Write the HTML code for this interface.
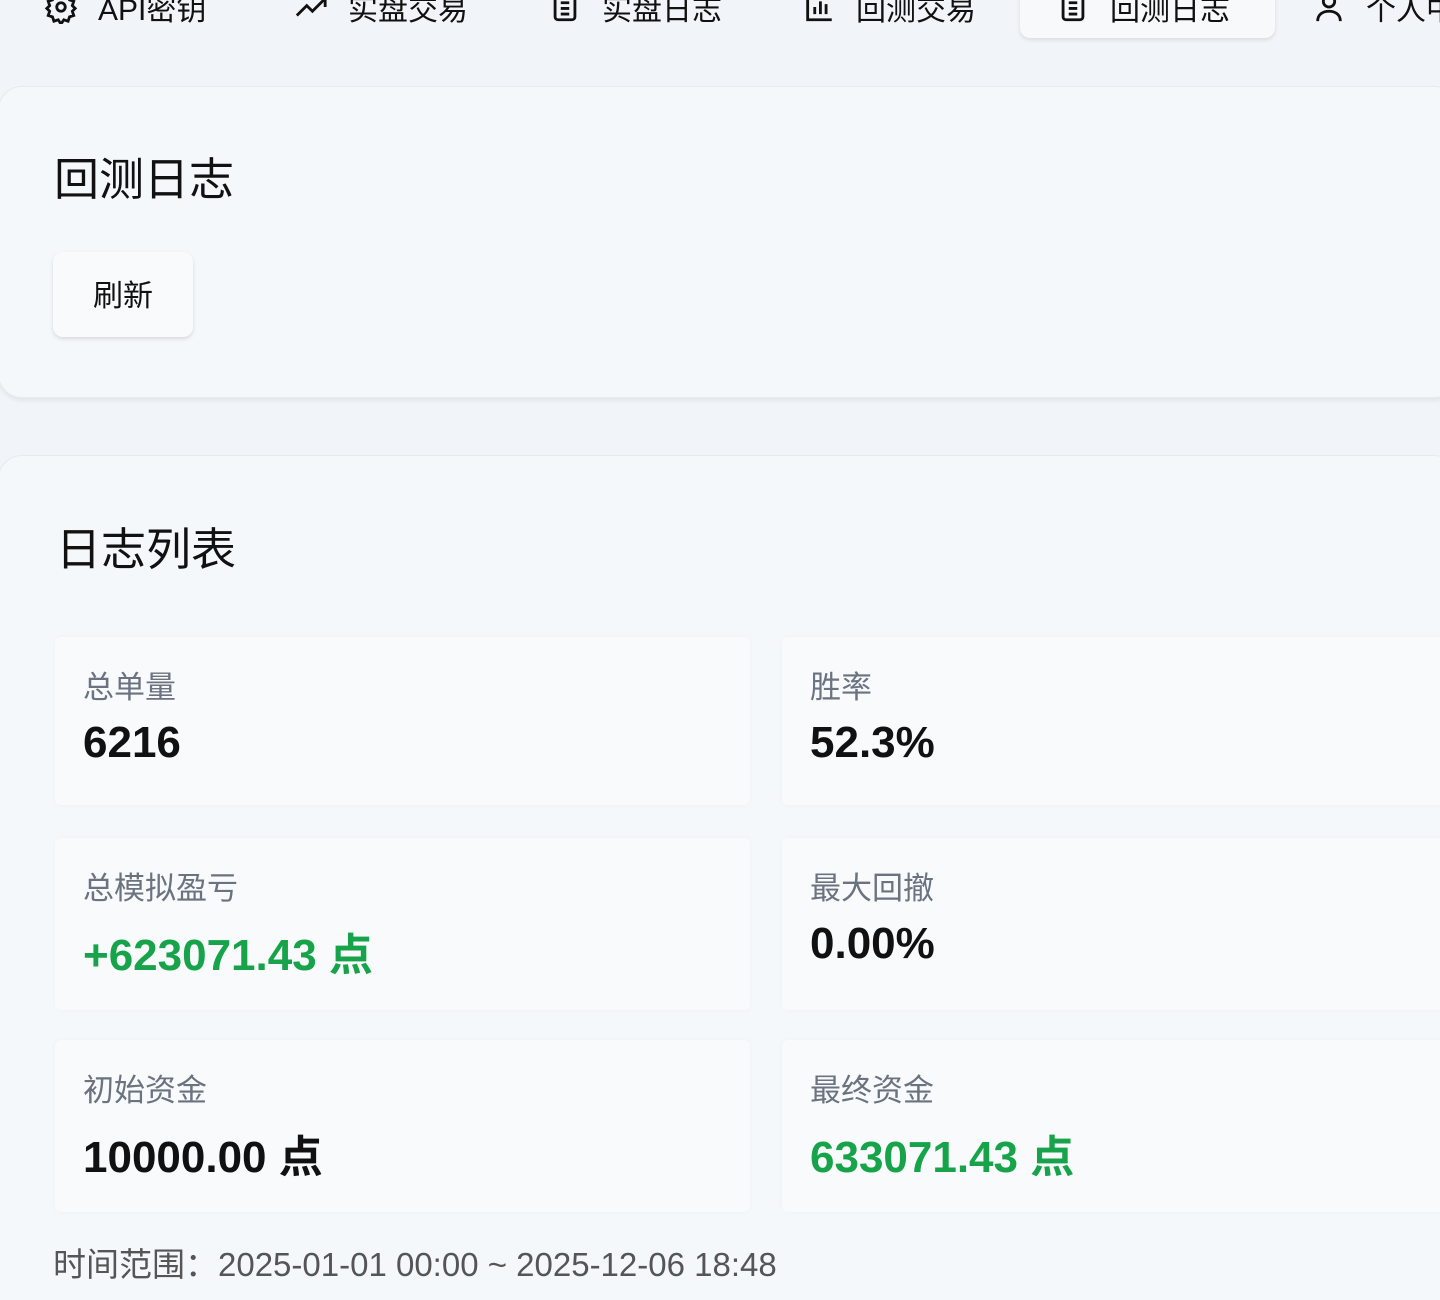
<!DOCTYPE html>
<html><head><meta charset="utf-8"><style>
*{box-sizing:border-box;margin:0;padding:0}
html,body{width:1440px;height:1300px;overflow:hidden}
body{background:#f1f5f9;font-family:"Liberation Sans","Noto Sans CJK SC",sans-serif;position:relative;color:#111}
.nav{position:absolute;top:-20px;left:0;height:54px;font-size:30px;color:#111}
.ni{position:absolute;top:0;height:54px;display:flex;align-items:center;white-space:nowrap}
.ni svg{width:34px;height:34px;margin-right:20px}
.act{position:absolute;left:1020px;top:-20px;width:255px;height:58px;background:#f7f9fb;border-radius:10px;box-shadow:0 2px 4px rgba(0,0,0,.1)}
.card{position:absolute;left:-2px;width:1460px;background:#f5f8fb;border:1px solid #e6eaee;border-radius:24px;box-shadow:0 3px 4px rgba(0,0,0,.06)}
h2{position:absolute;font-size:45px;font-weight:400;color:#111}
.btn{position:absolute;left:53px;top:252px;width:140px;height:85px;background:#f8fafc;border-radius:10px;box-shadow:0 2px 4px rgba(0,0,0,.12);font-size:30px;display:flex;align-items:center;justify-content:center;padding-bottom:4px}
.st{position:absolute;background:#f8fafc;border-radius:6px;box-shadow:0 0 6px rgba(0,0,0,.03)}
.st .l{position:absolute;left:28px;top:25px;font-size:31px;color:#6b7280}
.st .v{position:absolute;left:28px;top:81px;font-size:44px;font-weight:700;color:#111}
.g{color:#16a34a!important}
.foot{position:absolute;left:53px;top:1238px;font-size:33px;color:#555}
</style></head><body>
<div class="act"></div>
<div class="nav">
<div class="ni" style="left:44px"><svg viewBox="0 0 24 24" fill="none" stroke="#111" stroke-width="2"><circle cx="12" cy="12" r="3"/><path d="M12 2l2 3 3-1 1 3 3 1-1 3 2 2-2 2 1 3-3 1-1 3-3-1-2 3-2-3-3 1-1-3-3-1 1-3-2-2 2-2-1-3 3-1 1-3 3 1z"/></svg>API密钥</div>
<div class="ni" style="left:294px"><svg viewBox="0 0 24 24" fill="none" stroke="#111" stroke-width="2"><path d="M2 18l7-7 4 4 9-9M16 6h6v6"/></svg>实盘交易</div>
<div class="ni" style="left:548px"><svg viewBox="0 0 24 24" fill="none" stroke="#111" stroke-width="2"><rect x="5" y="3" width="14" height="18" rx="2"/><path d="M9 9h6M9 13h6M9 17h6"/></svg>实盘日志</div>
<div class="ni" style="left:802px"><svg viewBox="0 0 24 24" fill="none" stroke="#111" stroke-width="2"><path d="M4 3v18h17M9 17v-5M13 17V8M17 17v-7"/></svg>回测交易</div>
<div class="ni" style="left:1056px"><svg viewBox="0 0 24 24" fill="none" stroke="#111" stroke-width="2"><rect x="5" y="3" width="14" height="18" rx="2"/><path d="M9 9h6M9 13h6M9 17h6"/></svg>回测日志</div>
<div class="ni" style="left:1312px"><svg viewBox="0 0 24 24" fill="none" stroke="#111" stroke-width="2"><circle cx="12" cy="8" r="4"/><path d="M4 22c0-5 4-7 8-7s8 2 8 7"/></svg>个人中心</div>
</div>
<div class="card" style="top:86px;height:312px"></div>
<h2 style="left:54px;top:143px">回测日志</h2>
<div class="btn">刷新</div>
<div class="card" style="top:455px;height:900px"></div>
<h2 style="left:56px;top:513px">日志列表</h2>
<div class="st" style="left:55px;top:637px;width:695px;height:168px"><div class="l">总单量</div><div class="v">6216</div></div>
<div class="st" style="left:782px;top:637px;width:680px;height:168px"><div class="l">胜率</div><div class="v">52.3%</div></div>
<div class="st" style="left:55px;top:838px;width:695px;height:172px"><div class="l">总模拟盈亏</div><div class="v g">+623071.43 点</div></div>
<div class="st" style="left:782px;top:838px;width:680px;height:172px"><div class="l">最大回撤</div><div class="v">0.00%</div></div>
<div class="st" style="left:55px;top:1040px;width:695px;height:172px"><div class="l">初始资金</div><div class="v">10000.00 点</div></div>
<div class="st" style="left:782px;top:1040px;width:680px;height:172px"><div class="l">最终资金</div><div class="v g">633071.43 点</div></div>
<div class="foot">时间范围：2025-01-01 00:00 ~ 2025-12-06 18:48</div>
</body></html>
